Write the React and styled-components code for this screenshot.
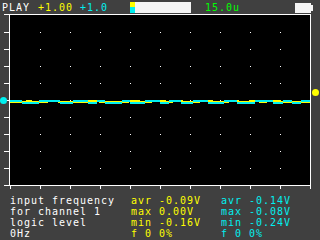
import React from "react";
import styled, {createGlobalStyle} from "styled-components";

const GRAY = "#404040"
const YELLOW = "#ffff00"
const CYAN = "#00f0f0"
const GREEN = "#00ff00"

const GlobalStyle = createGlobalStyle`
  html, body {
    margin: 0;
    padding: 0;
    background: ${GRAY};
  }
`

// pseudo random step trace, so it looks like noise but stays the same
function makeTrace(seed, levels, minLen, maxLen) {
    let s = seed
    const rnd = () => {
        s = (s * 9301 + 49297) % 233280
        return s / 233280
    }
    const segs = []
    let x = 0
    let last = -1
    while (x < 300) {
        const len = Math.floor(minLen + rnd() * (maxLen - minLen))
        let idx = Math.floor(rnd() * levels.length)
        if (idx === last) idx = (idx + 1) % levels.length
        last = idx
        segs.push({x: x + 1, y: levels[idx], len: Math.min(len, 300 - x)})
        x += len
    }
    return segs
}

const yellowTrace = makeTrace(17, [87, 86, 87], 6, 18)
const cyanTrace = makeTrace(53, [86, 88], 8, 22)

const rows = [
    ["input frequency", "avr -0.09V", "avr -0.14V"],
    ["for channel 1", "max 0.00V", "max -0.08V"],
    ["logic level", "min -0.16V", "min -0.24V"],
    ["0Hz", "f 0 0%", "f 0 0%"],
]

export default function App() {
    const dots = []
    for (let i = 1; i < 10; i++) {
        for (let j = 1; j < 10; j++) {
            dots.push(<rect key={i + "-" + j} x={1 + 30 * i} y={1 + 17 * j} width="1" height="1" fill="#fff"/>)
        }
    }
    const bottomTicks = []
    for (let i = 0; i <= 10; i++) {
        bottomTicks.push(<rect key={i} x={1 + 30 * i} y="171" width="1" height="4" fill="#fff"/>)
    }
    const sideTicks = [0]
    for (let j = 1; j <= 10; j++) sideTicks.push(1 + 17 * j)

    return (
        <Screen>
            <GlobalStyle/>
            <TopBar>
                <Label color="#ffffff">PLAY</Label>
                <Label color={YELLOW} $gap={8}>+1.00</Label>
                <Label color={CYAN} $gap={7}>+1.0</Label>
                <ChannelBox/>
                <TimeBar/>
                <Label color={GREEN} $gap={14}>15.0u</Label>
                <Battery/>
            </TopBar>

            <Middle>
                <LeftRail>
                    <svg width="9" height="176">
                        {sideTicks.map(y => <rect key={y} x="4" y={y} width="5" height="1" fill="#fff"/>)}
                    </svg>
                    <Marker color={CYAN} $top={83} $left={0}/>
                </LeftRail>
                <svg width="302" height="176" shapeRendering="crispEdges">
                    <rect x="0" y="0" width="302" height="172" fill="#fff"/>
                    <rect x="1" y="1" width="300" height="170" fill="#000"/>
                    {dots}
                    {bottomTicks}
                    <rect x="301" y="171" width="1" height="4" fill="#fff"/>
                    {yellowTrace.map(s => <rect key={"y" + s.x} x={s.x} y={s.y} width={s.len} height="2" fill={YELLOW}/>)}
                    {cyanTrace.map(s => <rect key={"c" + s.x} x={s.x} y={s.y} width={s.len} height="2" fill={CYAN}/>)}
                </svg>
                <RightRail>
                    <Marker color={YELLOW} $top={75} $left={1}/>
                </RightRail>
            </Middle>

            <Info>
                {rows.map((r, i) => (
                    <React.Fragment key={i}>
                        <Cell color="#ffffff">{r[0]}</Cell>
                        <Cell color={YELLOW}>{r[1]}</Cell>
                        <Cell color={CYAN}>{r[2]}</Cell>
                    </React.Fragment>
                ))}
            </Info>
        </Screen>
    )
}

const Screen = styled.div`
  width: 320px;
  height: 240px;
  background: ${GRAY};
  display: flex;
  flex-direction: column;
  overflow: hidden;
  font-family: "DejaVu Sans Mono", monospace;
  font-size: 10px;
  letter-spacing: 0.98px;
`

const TopBar = styled.div`
  height: 14px;
  display: flex;
  align-items: flex-start;
  padding-left: 2px;
  box-sizing: border-box;
`

const Label = styled.div`
  color: ${p => p.color};
  margin-left: ${p => p.$gap || 0}px;
  line-height: 12px;
  padding-top: 2px;
  white-space: pre;
`

const ChannelBox = styled.div`
  width: 5px;
  height: 11px;
  margin-top: 2px;
  margin-left: 22px;
  background: linear-gradient(to bottom, ${YELLOW} 0 5px, ${CYAN} 5px 11px);
`

const TimeBar = styled.div`
  width: 56px;
  height: 11px;
  margin-top: 2px;
  background: #f4f4f4;
`

const Battery = styled.div`
  position: relative;
  width: 16px;
  height: 10px;
  margin: 3px 9px 0 auto;
  background: #f4f4f4;

  &::after {
    content: "";
    position: absolute;
    left: 16px;
    top: 2px;
    width: 2px;
    height: 6px;
    background: #f4f4f4;
  }
`

const Middle = styled.div`
  display: flex;
  height: 176px;
`

const LeftRail = styled.div`
  position: relative;
  width: 9px;
`

const RightRail = styled.div`
  position: relative;
  flex: 1;
`

const Marker = styled.div`
  position: absolute;
  top: ${p => p.$top}px;
  left: ${p => p.$left}px;
  width: 7px;
  height: 7px;
  border-radius: 50%;
  background: ${p => p.color};
`

const Info = styled.div`
  display: grid;
  grid-template-columns: 121px 90px 1fr;
  grid-auto-rows: 11px;
  padding: 5px 0 0 10px;
`

const Cell = styled.div`
  color: ${p => p.color};
  line-height: 11px;
  white-space: pre;
`
